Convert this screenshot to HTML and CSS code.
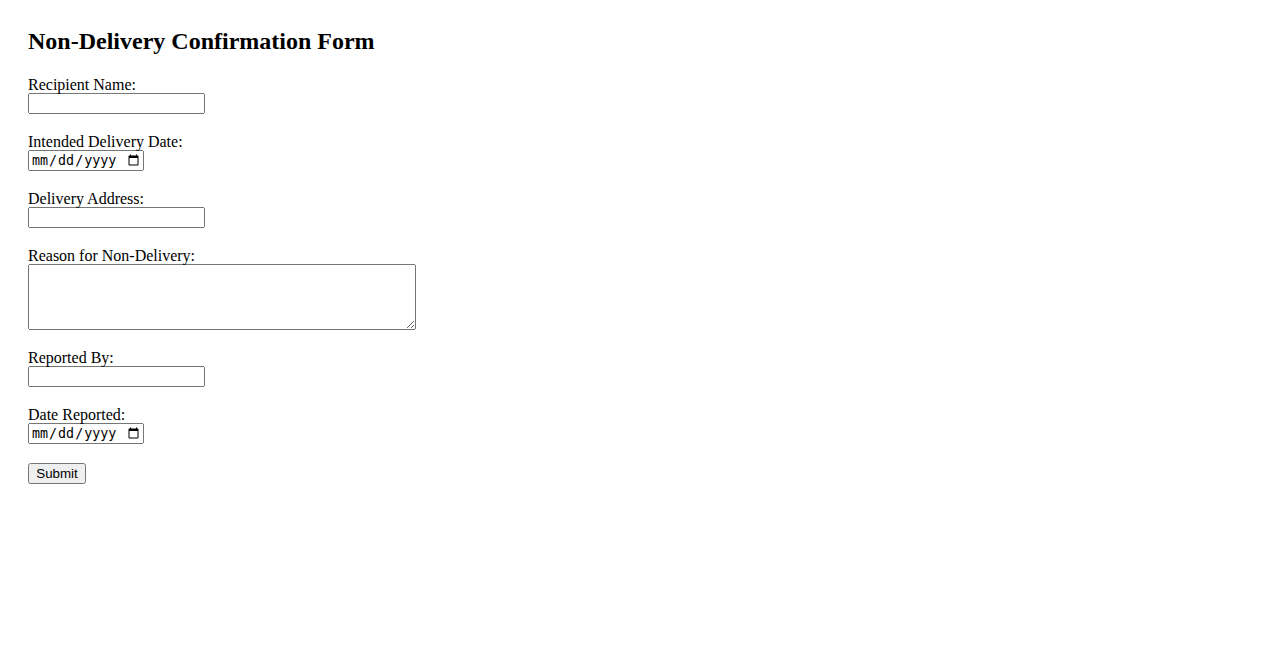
FILE: index.html
```html
<!DOCTYPE html>
<html>
<head>
<meta charset="utf-8">
<title>Non-Delivery Confirmation Form</title>
<link rel="stylesheet" href="styles.css">
</head>
<body>
<div class="page">
  <h2 class="title">Non-Delivery Confirmation Form</h2>
  <form class="form">
    <div class="field">
      <label class="label" for="recipient">Recipient Name:</label>
      <input class="text" type="text" id="recipient">
    </div>
    <div class="field">
      <label class="label" for="intended">Intended Delivery Date:</label>
      <input class="date" type="date" id="intended">
    </div>
    <div class="field">
      <label class="label" for="address">Delivery Address:</label>
      <input class="text" type="text" id="address">
    </div>
    <div class="field">
      <label class="label" for="reason">Reason for Non-Delivery:</label>
      <textarea class="area" id="reason" rows="4"></textarea>
    </div>
    <div class="field">
      <label class="label" for="reporter">Reported By:</label>
      <input class="text" type="text" id="reporter">
    </div>
    <div class="field">
      <label class="label" for="reported">Date Reported:</label>
      <input class="date" type="date" id="reported">
    </div>
    <button class="submit" type="submit">Submit</button>
  </form>
</div>
</body>
</html>
```

FILE: styles.css
```css
html, body {
  margin: 0;
  padding: 0;
  background: #ffffff;
}
.page {
  padding: 28px;
  font-family: "Liberation Serif", "Times New Roman", serif;
  font-size: 16px;
  color: #000000;
}
.title {
  font-size: 24px;
  font-weight: bold;
  margin: 0 0 21px 0;
}
.field {
  margin-bottom: 19px;
}
.label {
  display: block;
  height: 17px;
}
.text, .date, .area {
  display: block;
  margin: 0;
}
.text {
  width: 177px;
  height: 21px;
  box-sizing: border-box;
}
.date {
  width: 116px;
  height: 21px;
  box-sizing: border-box;
}
.area {
  width: 388px;
  height: 66px;
  box-sizing: border-box;
}
.submit {
  display: block;
  margin: 19px 0 0 0;
  height: 21px;
  width: 58px;
  box-sizing: border-box;
}
```
